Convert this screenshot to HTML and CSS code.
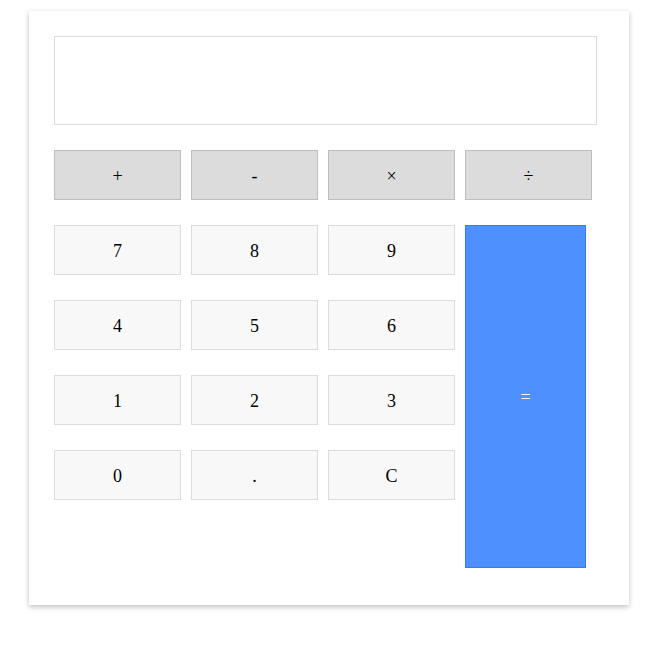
FILE: index.html
```html
<!DOCTYPE html>
<html>
<head>
<meta charset="utf-8">
<link rel="stylesheet" href="styles.css">
</head>
<body>
<div class="calc">
  <div class="display"></div>
  <div class="ops">
    <button class="btn op">+</button>
    <button class="btn op">-</button>
    <button class="btn op">×</button>
    <button class="btn op">÷</button>
  </div>
  <div class="main">
    <div class="keys">
      <button class="btn key">7</button>
      <button class="btn key">8</button>
      <button class="btn key">9</button>
      <button class="btn key">4</button>
      <button class="btn key">5</button>
      <button class="btn key">6</button>
      <button class="btn key">1</button>
      <button class="btn key">2</button>
      <button class="btn key">3</button>
      <button class="btn key">0</button>
      <button class="btn key">.</button>
      <button class="btn key">C</button>
    </div>
    <button class="btn equals">=</button>
  </div>
</div>
</body>
</html>
```
FILE: styles.css
```css
html, body {
  margin: 0;
  padding: 0;
  background: #fff;
}
body {
  padding: 11px 0 30px 29px;
}
.calc {
  width: 600px;
  box-sizing: border-box;
  padding: 25px 25px 37px;
  background: #fff;
  box-shadow: 0 2px 5px rgba(0, 0, 0, 0.25);
}
.display {
  width: 543px;
  height: 89px;
  box-sizing: border-box;
  border: 1px solid #dcdcdc;
  margin-bottom: 25px;
}
.ops {
  display: flex;
  gap: 10px;
  margin-bottom: 25px;
}
.btn {
  width: 127px;
  height: 50px;
  box-sizing: border-box;
  margin: 0;
  padding: 2px 0 0;
  font-family: "Liberation Serif", "Times New Roman", serif;
  font-size: 18px;
  color: #000;
  border-radius: 0;
}
.op {
  background: #dcdcdc;
  border: 1px solid #bdbdbd;
}
.key {
  background: #f8f8f8;
  border: 1px solid #dcdcdc;
}
.main {
  display: flex;
  gap: 10px;
  align-items: flex-start;
}
.keys {
  display: grid;
  grid-template-columns: repeat(3, 127px);
  column-gap: 10px;
  row-gap: 25px;
}
.equals {
  width: 121px;
  height: 343px;
  background: #4d90fe;
  border: 1px solid #3b7be6;
  color: #fff;
}
```
